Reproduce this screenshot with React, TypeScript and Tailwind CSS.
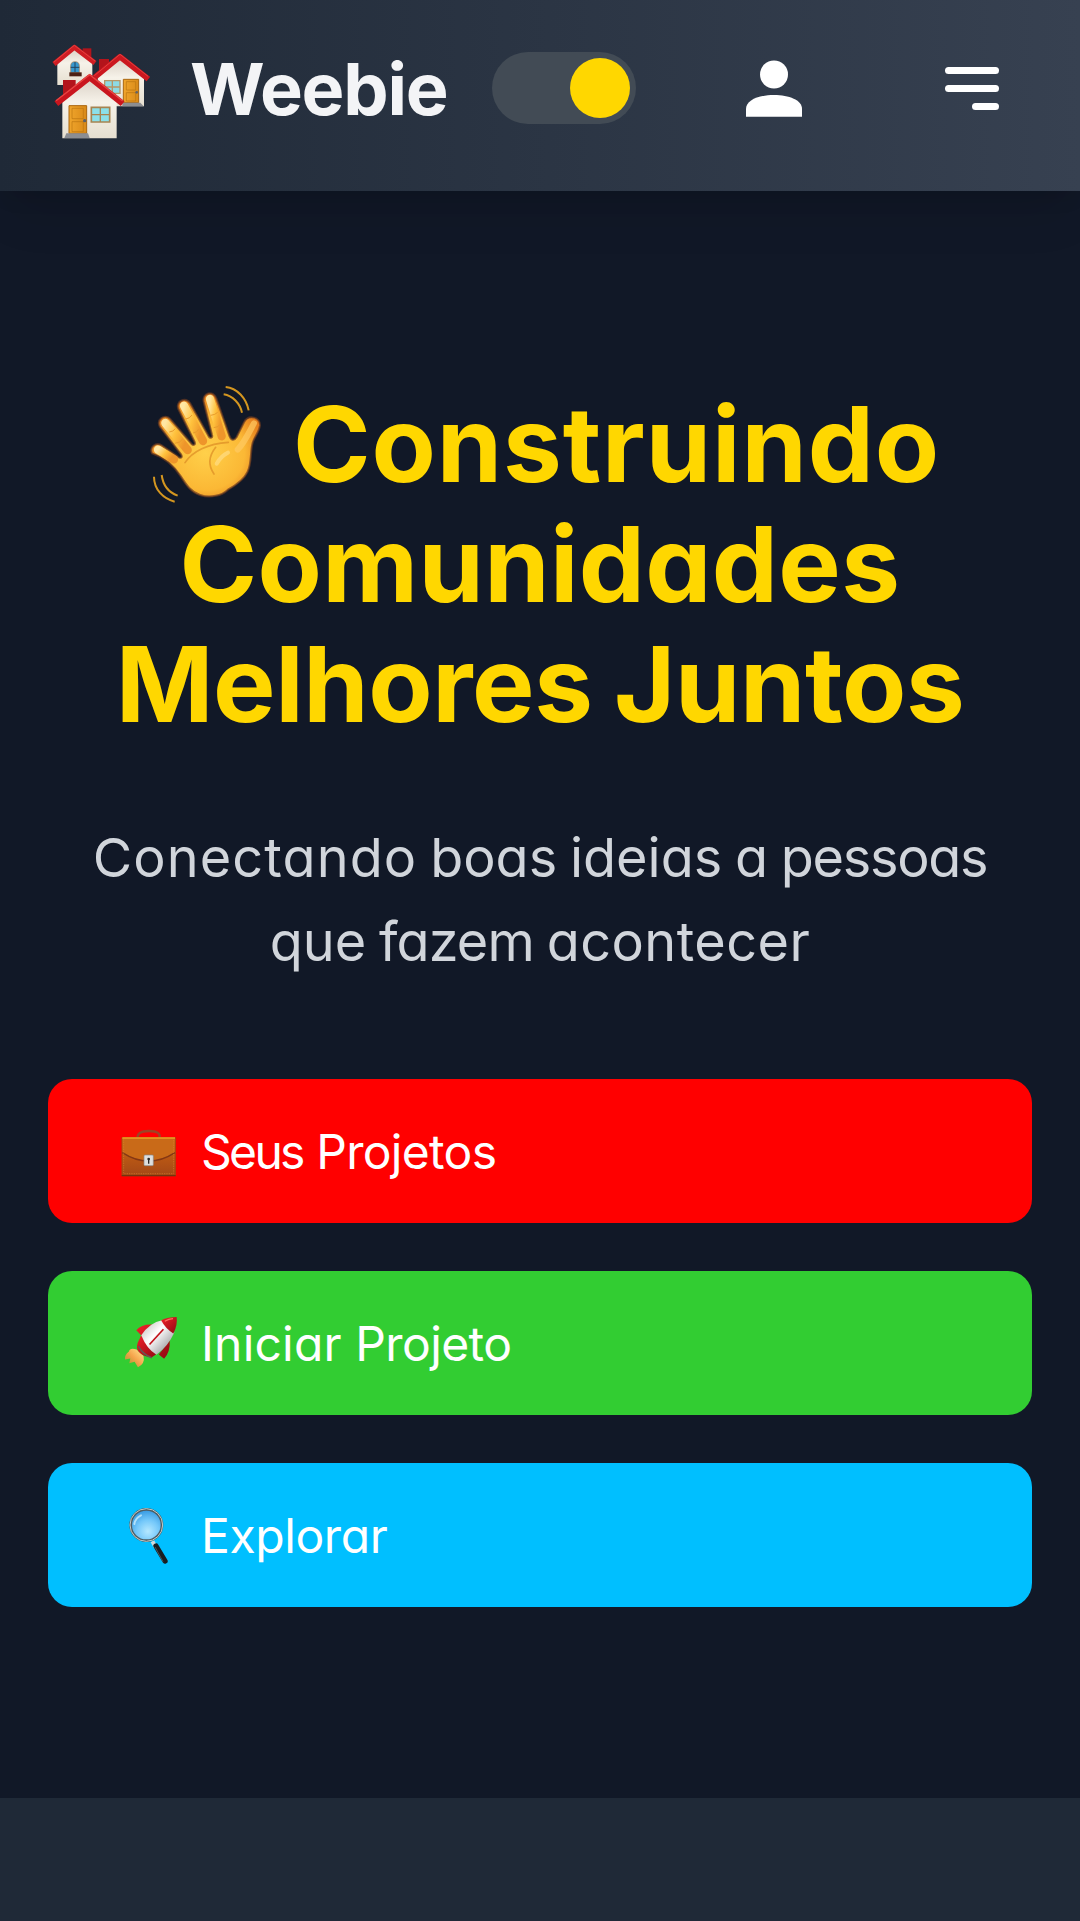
import type { ReactNode } from "react";

function Houses() {
  return (
    <svg width="100" height="100" viewBox="60 35 300 300" className="shrink-0">
      <defs>
        <linearGradient id="wall" x1="0" y1="0" x2="0" y2="1">
          <stop offset="0" stopColor="#d9cfc4" />
          <stop offset=".4" stopColor="#f6f2e9" />
          <stop offset="1" stopColor="#e6dfd0" />
        </linearGradient>
        <linearGradient id="door" x1="0" y1="0" x2="1" y2="0">
          <stop offset="0" stopColor="#f0a52c" />
          <stop offset="1" stopColor="#d98a18" />
        </linearGradient>
      </defs>
      <path d="M158 54h26v45h-26z" fill="#b3141b" />
      <path d="M82 92L133 54l54 42v68H82z" fill="url(#wall)" />
      <path d="M72 101L133 51l62 47" fill="none" stroke="#cf1d23" strokeWidth="15" strokeLinejoin="round" />
      <path d="M72 95L133 45l62 47" fill="none" stroke="#e6413f" strokeWidth="3" />
      <path d="M122 127v-20q0-13 13-13t13 13v20z" fill="#3798cf" stroke="#a77d52" strokeWidth="2" />
      <path d="M135 95v30M122 111h26" stroke="#23445e" strokeWidth="3" />
      <path d="M118 126h37v12h-37z" fill="#4c2014" />
      <path d="M207 86h30v38h-30z" fill="#b3141b" />
      <path d="M203 134L270 84l72 55v89H203z" fill="url(#wall)" />
      <path d="M193 142L270 79l85 67" fill="none" stroke="#cb171f" strokeWidth="17" strokeLinejoin="round" />
      <path d="M193 136L270 72l84 66" fill="none" stroke="#e43f3e" strokeWidth="3" />
      <path d="M224 151h46v38h-46z" fill="#8ddbe4" stroke="#b69766" strokeWidth="4" />
      <path d="M247 151v38M224 170h46" stroke="#b69766" strokeWidth="4" />
      <path d="M280 147h46v70h-46z" fill="url(#door)" stroke="#a9650f" strokeWidth="3" />
      <path d="M289 154h28v25h-28zM289 187h28v25h-28z" fill="none" stroke="#b9730f" strokeWidth="2" />
      <circle cx="320" cy="186" r="4" fill="#626468" />
      <path d="M277 217h54l10 11h-64z" fill="#8c8e92" />
      <path d="M99 149h38v42H99z" fill="#b3141b" />
      <path d="M97 205l82-62 81 61v120H97z" fill="url(#wall)" />
      <path d="M79 220l100-79 99 79" fill="none" stroke="#c9151e" strokeWidth="18" strokeLinejoin="round" />
      <path d="M78 211l101-78 99 79" fill="none" stroke="#e84442" strokeWidth="4" />
      <path d="M117 226h53v83h-53z" fill="url(#door)" stroke="#aa650d" strokeWidth="3" />
      <path d="M126 234h34v31h-34zM126 274h34v30h-34z" fill="none" stroke="#bb7610" strokeWidth="2" />
      <circle cx="164" cy="271" r="5" fill="#5d6065" />
      <path d="M184 231h55v44h-55z" fill="#8be0e9" stroke="#a78451" strokeWidth="5" />
      <path d="M211 231v44M184 253h55" stroke="#a78451" strokeWidth="4" />
      <path d="M109 309h65l5 14h-76z" fill="#8b8d92" />
    </svg>
  );
}

function Wave() {
  return (
    <svg width="114" height="120" viewBox="58 40 342 360" className="shrink-0">
      <defs>
        <radialGradient id="palm" cx=".5" cy=".58" r=".55">
          <stop offset="0" stopColor="#ffd04a" />
          <stop offset=".65" stopColor="#fbb835" />
          <stop offset="1" stopColor="#e37c1b" />
        </radialGradient>
        <linearGradient id="finger" x1="0" y1="0" x2="1" y2=".5">
          <stop offset="0" stopColor="#ffe7a3" />
          <stop offset=".5" stopColor="#ffc23d" />
          <stop offset="1" stopColor="#ee952a" />
        </linearGradient>
      </defs>
      <path
        d="M67 248C58 230 78 213 96 224l53 37c6 2 10-2 5-10L91 169c-13-20 12-42 30-25l65 76c6 6 12 2 9-6l-49-99c-9-22 20-38 35-18l56 100c5 7 13 5 10-5L222 93c-5-26 28-36 38-10l39 112c5 14 14 17 22 4l22-44c13-25 50-16 48 10-3 20-17 34-22 51-8 28-2 60-15 87-10 22-34 40-59 54-18 17-52 27-84 16-28-9-42-32-57-55-20-32-48-57-87-70z"
        fill="url(#palm)" stroke="#6b3b21" strokeOpacity=".7" strokeWidth="6"
      />
      <g fill="none" stroke="url(#finger)" strokeWidth="25" strokeLinecap="round">
        <path d="M85 237l48 29" />
        <path d="M107 157l67 81" />
        <path d="M163 105l57 106" />
        <path d="M241 85l35 112" />
      </g>
      <path d="M373 158c-13 23-28 57-49 79" fill="none" stroke="#ffcb62" strokeWidth="18" strokeLinecap="round" opacity=".7" />
      <path d="M166 276c22-34 69-57 130-61M258 230c-22 28-23 54-5 80" fill="none" stroke="#dc8c23" strokeWidth="5" strokeLinecap="round" opacity=".7" />
      <path d="M119 184q12-1 18-10M135 218q17-1 24-13M168 145q12-1 19-12M190 187q13-1 17-12M243 134q13-1 21-9M252 171q12-1 18-8" fill="none" stroke="#e89b2c" strokeWidth="3" />
      <path d="M261 279q14-24 34-33" fill="none" stroke="#ffdf8b" strokeWidth="12" strokeLinecap="round" opacity=".65" />
      <path d="M288 49c34 3 62 34 69 70M282 71c27 4 49 27 55 55M73 318c0 39 28 66 62 75M96 313c4 30 20 52 48 62" fill="none" stroke="#d49620" strokeWidth="6" />
    </svg>
  );
}

function Briefcase() {
  return (
    <svg width="56" height="48" viewBox="243 173 166 144" className="relative -left-px top-0.5">
      <defs>
        <linearGradient id="leather" x1="0" y1="0" x2="0" y2="1">
          <stop offset="0" stopColor="#d66f13" />
          <stop offset=".5" stopColor="#ba5814" />
          <stop offset="1" stopColor="#a34817" />
        </linearGradient>
      </defs>
      <path d="M292 202q-4-23 34-23t31 23" fill="none" stroke="#9d4426" strokeWidth="7" />
      <path d="M245 199h160v114H245z" fill="url(#leather)" stroke="#a34a10" strokeWidth="3" />
      <path d="M247 243q78 51 156 0v-42H247z" fill="#c96a18" />
      <path d="M246 244q79 51 158 0" fill="none" stroke="#843714" strokeWidth="4" />
      <path d="M246 200h158" stroke="#efa125" strokeWidth="4" />
      <path d="M250 204v103h150V204" fill="none" stroke="#d88d36" strokeWidth="1.5" strokeDasharray="4 3" />
      <path d="M244 313h162" stroke="#73340e" strokeWidth="4" />
      <rect x="311" y="251" width="28" height="32" rx="3" fill="#dedede" stroke="#868686" strokeWidth="2" />
      <circle cx="325" cy="263" r="4" fill="#292929" />
      <path d="M325 263v14" stroke="#292929" strokeWidth="4" />
    </svg>
  );
}

function Rocket() {
  return (
    <svg width="55" height="53" viewBox="68 75 166 160" className="relative left-px">
      <defs>
        <linearGradient id="shell" x1="0" y1="0" x2="1" y2="1">
          <stop offset=".1" stopColor="#c8c5c2" />
          <stop offset=".42" stopColor="#fff" />
          <stop offset="1" stopColor="#77777a" />
        </linearGradient>
        <linearGradient id="red" x1="0" y1="0" x2="1" y2="1">
          <stop offset="0" stopColor="#f2202a" />
          <stop offset="1" stopColor="#8e0911" />
        </linearGradient>
        <linearGradient id="fire" x1="1" y1="0" x2="0" y2="1">
          <stop offset="0" stopColor="#ffeb93" />
          <stop offset=".5" stopColor="#f6a34b" />
          <stop offset="1" stopColor="#df7b30" stopOpacity=".6" />
        </linearGradient>
      </defs>
      <path d="M106 176q-21-6-23 6-14 10-12 24l16-3-3 15 16-5 10 17q22-10 17-34z" fill="url(#fire)" />
      <path d="M122 135l-17-17q16-19 49-17zM173 191l16 13q19-20 17-55z" fill="url(#red)" />
      <path d="M110 154q-7 18 3 30 14 15 38 16l20-13-51-54z" fill="url(#red)" />
      <path d="M111 166q16 27 41 35" fill="none" stroke="#675755" strokeWidth="5" />
      <path d="M120 133q26-38 63-45l37 37q-19 42-54 67-29-17-46-59z" fill="url(#shell)" />
      <path d="M180 88q22-10 47-10 3 25-10 50-24-15-37-40z" fill="url(#red)" />
      <path d="M187 115l-42 46" stroke="#c41119" strokeWidth="5" />
      <path d="M191 91q12-7 25-8" fill="none" stroke="#ff6d5e" strokeWidth="4" />
    </svg>
  );
}

function Magnifier() {
  return (
    <svg width="41" height="60" viewBox="85 78 123 180" className="relative -left-0.5 top-px">
      <defs>
        <radialGradient id="lens" cx=".55" cy=".7" r=".65">
          <stop offset="0" stopColor="#b5e8ff" />
          <stop offset=".55" stopColor="#74c8fa" />
          <stop offset="1" stopColor="#3b9de4" />
        </radialGradient>
      </defs>
      <path d="M158 184l10 17" stroke="#cfd9dc" strokeWidth="12" />
      <path d="M169 198l27 45" stroke="#191d20" strokeWidth="16" strokeLinecap="round" />
      <path d="M166 201l24 44" stroke="#617078" strokeWidth="2" />
      <circle cx="140" cy="135" r="47" fill="url(#lens)" stroke="#4e5c62" strokeWidth="8" />
      <circle cx="140" cy="135" r="49" fill="none" stroke="#c1ccca" strokeWidth="3" />
      <path d="M104 132q3-18 20-26" fill="none" stroke="#d7f5ff" strokeWidth="6" strokeLinecap="round" opacity=".7" />
    </svg>
  );
}

function Action({ color, icon, children }: { color: string; icon: ReactNode; children: ReactNode }) {
  return (
    <button className={`flex h-36 w-full items-center rounded-3xl pl-[72px] text-left text-[48px] leading-none text-white ${color}`}>
      <span className="flex w-[60px] shrink-0 justify-center">{icon}</span>
      <span className="ml-[21px] mt-0.5 whitespace-nowrap">{children}</span>
    </button>
  );
}

export default function App() {
  return (
    <div className="flex h-[1921px] w-[1080px] flex-col overflow-hidden bg-[#111827] font-['Inter',sans-serif] [font-feature-settings:'cv11']">
      <header className="relative z-10 flex h-[190.5px] shrink-0 items-start bg-linear-to-r from-[#1f2937] to-[#374151] shadow-[0_30px_45px_-9px_rgba(0,0,0,0.1),0_12px_18px_-6px_rgba(0,0,0,0.1)]">
        <div className="ml-[50px] mt-[42px]"><Houses /></div>
        <div className="ml-[40px] mt-[41px] w-[302px] whitespace-nowrap text-[72px] leading-[96px] font-bold text-[#f3f4f6]">
          <span className="tracking-[-1.2px]">Weebie</span>
        </div>
        <div className="mt-[52px] flex h-[72px] w-36 shrink-0 items-center justify-end rounded-full bg-[#424b55] p-1.5">
          <div className="size-[60px] rounded-full bg-[#ffd700]" />
        </div>
        <svg className="ml-[110px] mt-[60px] shrink-0" width="56" height="57" viewBox="0 0 56 57" fill="white">
          <circle cx="28" cy="14.5" r="14" />
          <path d="M0 56.7v-7.7C0 40 13 35 28 35s28 5 28 14v7.7z" />
        </svg>
        <div className="ml-[143px] mt-[67px] flex w-[54px] flex-col items-end gap-[11px]">
          <div className="h-[7px] w-full rounded-full bg-white" />
          <div className="h-[7px] w-full rounded-full bg-white" />
          <div className="h-[7px] w-[27px] rounded-full bg-white" />
        </div>
      </header>
      <main className="flex h-[1607.5px] shrink-0 flex-col px-12 pt-[193.5px]">
        <h1 className="flex flex-col items-center whitespace-nowrap text-[105px] leading-[120px] font-bold text-[#ffd700]">
          <span className="flex items-center gap-[30px] pl-[9px]"><Wave /><span className="tracking-[0.9px]">Construindo</span></span>
          <span className="tracking-[0.35px]">Comunidades</span>
          <span className="tracking-[-0.4px] [word-spacing:-3px]">Melhores Juntos</span>
        </h1>
        <p className="mt-[72px] flex flex-col items-center whitespace-nowrap text-[54px] leading-[84px] text-[#d1d5db] [word-spacing:-2.4px]">
          <span>
            <span className="tracking-[1.1px]">Conectando</span> boas ideias a <span className="tracking-[-1.3px]">pessoas</span>
          </span>
          <span>
            que <span className="tracking-[-0.9px]">fazem</span> <span className="tracking-[0.45px]">acontecer</span>
          </span>
        </p>
        <div className="mt-[94.5px] flex flex-col gap-12">
          <Action color="bg-[#ff0000]" icon={<Briefcase />}>
            <span className="tracking-[-2.7px]">Seus</span> <span className="tracking-[-0.7px]">Projetos</span>
          </Action>
          <Action color="bg-[#32cd32]" icon={<Rocket />}>
            <span className="tracking-[0.2px]">Iniciar</span> <span className="tracking-[-0.6px]">Projeto</span>
          </Action>
          <Action color="bg-[#00bfff]" icon={<Magnifier />}>
            <span className="tracking-[-0.4px]">Explorar</span>
          </Action>
        </div>
      </main>
      <section className="grow bg-[#1f2937]" />
    </div>
  );
}
